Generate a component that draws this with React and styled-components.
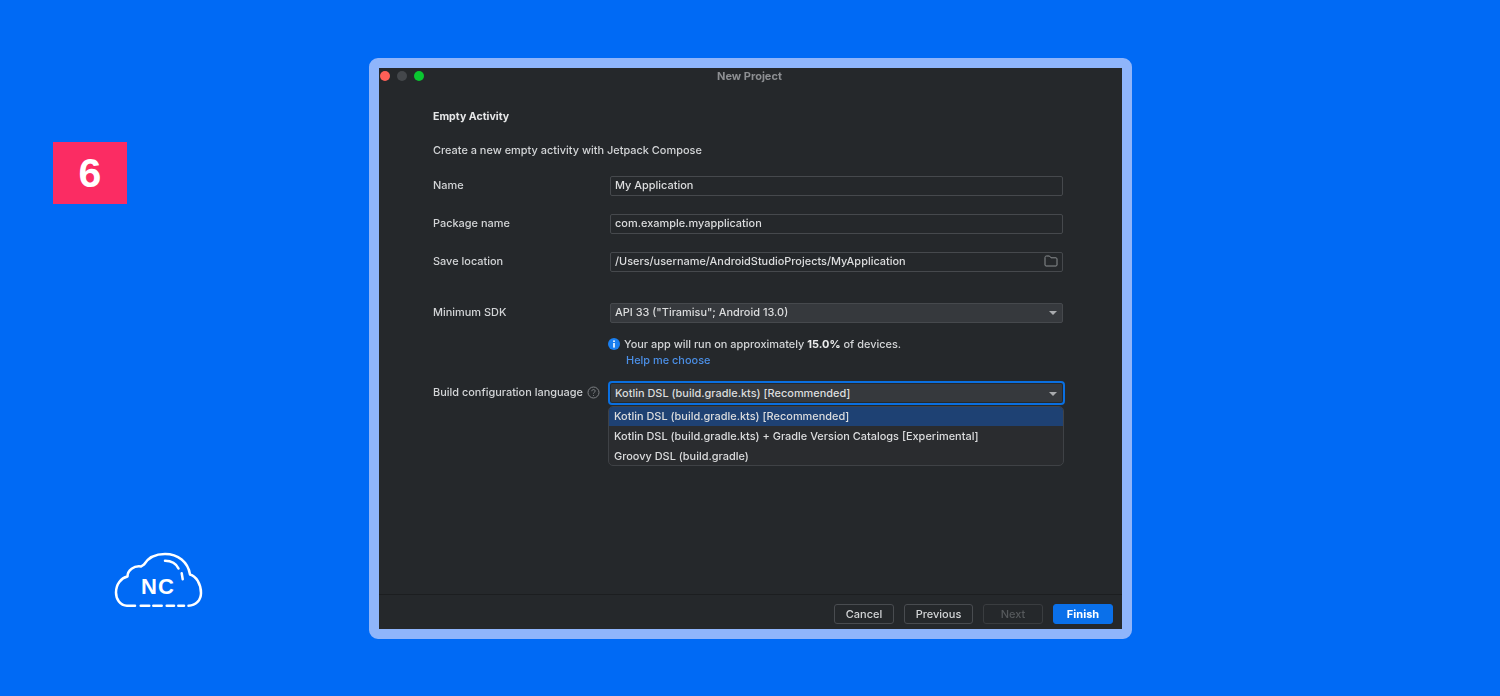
import React from "react";
import styled, { createGlobalStyle } from "styled-components";

const Global = createGlobalStyle`
  html, body { margin: 0; padding: 0; background: #006af5; }
  body { font-family: Inter, "Liberation Sans", sans-serif; }
`;

const Page = styled.div`
  width: 1500px;
  height: 696px;
  background: #006af5;
  display: flex;
  overflow: hidden;
`;

const Side = styled.aside`
  width: 369px;
  height: 696px;
  flex: none;
  padding: 142px 0 86px 53px;
  box-sizing: border-box;
  display: flex;
  flex-direction: column;
`;

const Badge = styled.div`
  width: 74px;
  height: 62px;
  background: #fb2c63;
  color: #fff;
  font: 700 41px/63px "Liberation Sans", sans-serif;
  text-align: center;
`;

const Logo = styled.div`
  margin-top: auto;
  margin-left: 61px;
  width: 90px;
  height: 58px;
  position: relative;
  color: #fff;
`;

const LogoText = styled.span`
  position: absolute;
  left: 0;
  right: 2px;
  top: 23px;
  text-align: center;
  font: 700 22px/24px "Liberation Sans", sans-serif;
  letter-spacing: 1px;
`;

const Frame = styled.div`
  margin-top: 58px;
  width: 763px;
  height: 581px;
  box-sizing: border-box;
  border: 10px solid #8fb5fb;
  border-radius: 9px;
  background: #25282b;
`;

const Win = styled.div`
  width: 743px;
  height: 561px;
  display: flex;
  flex-direction: column;
  color: #d3d5d7;
  font-size: 10.95px;
  font-weight: 500;
  line-height: 16px;
  filter: blur(0.35px);
`;

const TitleBar = styled.div`
  height: 16px;
  flex: none;
  position: relative;
  display: flex;
  align-items: center;
  justify-content: center;
  font-weight: 700;
  font-size: 11px;
  color: #8d8f92;
  padding-right: 2px;
`;

const Lights = styled.div`
  position: absolute;
  left: 1px;
  top: 3px;
  display: flex;
  gap: 7px;
`;

const Light = styled.span`
  width: 10px;
  height: 10px;
  border-radius: 50%;
  background: ${(p) => p.$c};
`;

const Body = styled.div`
  flex: 1;
  padding: 25px 57px 0 54px;
  display: flex;
  flex-direction: column;
`;

const Heading = styled.div`
  font-weight: 700;
  font-size: 10.6px;
  color: #e6e7e8;
`;

const Desc = styled.div`
  margin-top: 17px;
  margin-bottom: 18px;
`;

const Row = styled.div`
  display: grid;
  grid-template-columns: 177px 453px;
  align-items: center;
  margin-bottom: ${(p) => p.$mb ?? 18}px;
`;

const Label = styled.label`
  display: flex;
  align-items: center;
  gap: 4px;
  white-space: nowrap;
  position: relative;
  top: -1px;
`;

const Field = styled.div`
  height: 20px;
  box-sizing: border-box;
  border: 1px solid #46494d;
  border-radius: 2px;
  padding: 0 4px 2px;
  display: flex;
  align-items: center;
  justify-content: space-between;
  color: #dcddde;
  background: ${(p) => (p.$select ? "#36393d" : "transparent")};
`;

const SelectWrap = styled.div`
  position: relative;
`;

const Focused = styled(Field)`
  outline: 2px solid #0a6fe0;
  outline-offset: 0;
  border-color: #25282b;
  margin: 1px 0;
  padding-bottom: 0;
`;

const Caret = styled.span`
  width: 0;
  height: 0;
  border-left: 4px solid transparent;
  border-right: 4px solid transparent;
  border-top: 4px solid #a9abae;
  margin: 2px 1px 0 0;
`;

const Popup = styled.ul`
  position: absolute;
  left: -2px;
  right: -1px;
  top: 24px;
  margin: 0;
  padding: 0;
  list-style: none;
  background: #2a2c2f;
  border: 1px solid #3f4246;
  border-radius: 5px;
  overflow: hidden;
  height: 60px;
  box-sizing: border-box;
  z-index: 2;
`;

const Option = styled.li`
  height: 20px;
  line-height: 20px;
  padding: 0 5px;
  color: #dcddde;
  background: ${(p) => (p.$on ? "#1e4173" : "transparent")};
  &:first-child { height: 19px; line-height: 19px; }
`;

const Info = styled.div`
  margin-left: 177px;
  margin-bottom: 14px;
  position: relative;
  padding-left: 14px;
  margin-top: -5px;
`;

const InfoIcon = styled.svg`
  position: absolute;
  left: -2px;
  top: 2px;
`;

const InfoLine = styled.div`
  b { font-weight: 700; color: #eceded; }
`;

const HelpLink = styled.a`
  display: block;
  color: #4b8fe6;
  margin-left: 2px;
`;

const Footer = styled.footer`
  flex: none;
  height: 35px;
  box-sizing: border-box;
  border-top: 1px solid #1c1e20;
  padding: 9px 9px 5px 0;
  display: flex;
  justify-content: flex-end;
  gap: 10px;
`;

const Btn = styled.button`
  width: ${(p) => p.$w ?? 60}px;
  height: 20px;
  margin: 0;
  padding: 0;
  box-sizing: border-box;
  border-radius: 3px;
  border: 1px solid ${(p) => (p.$primary ? "#0a70ea" : p.$off ? "#3a3d40" : "#494c50")};
  background: ${(p) => (p.$primary ? "#0a70ea" : "transparent")};
  color: ${(p) => (p.$primary ? "#fff" : p.$off ? "#56595c" : "#d3d5d7")};
  font: ${(p) => (p.$primary ? 700 : 500)} 11px/16px Inter, "Liberation Sans", sans-serif;
`;

const Cloud = () => (
  <svg width="90" height="58" viewBox="0 0 90 58" fill="none" stroke="currentColor" strokeWidth="2.5" strokeLinecap="round" strokeLinejoin="round">
    <path d="M21 53.700H13C6 53.700 2 47 2 40.500C2 32 7 26 13.500 24.500C13.500 18 20 13.500 27 14.500L30 12.500C34 6 42 2 51 2C64 2 74 10 76 22.500C82 24 87 32 87 41C87 48 82 53.700 74.500 53.700" />
    <path d="M26.700 53.700H35.300M39.300 53.700H47.700M52.700 53.700H60M64.300 53.700H70" />
    <path d="M51 8.700C57 8.700 62 11 64.500 16.500M67.700 21.300L68.700 27.300" />
  </svg>
);

const Folder = () => (
  <svg width="14" height="12" viewBox="0 0 14 12" fill="none" stroke="#8b8e91" strokeWidth="1">
    <path d="M1 2.500 C1 1.700 1.500 1 2.300 1H5.500L7 2.800H12C12.600 2.800 13 3.300 13 3.900V10C13 10.600 12.600 11 12 11H2C1.400 11 1 10.600 1 10Z" />
  </svg>
);

const Help = () => (
  <svg width="13" height="13" viewBox="0 0 13 13" fill="none" stroke="#7f8285" strokeWidth="1">
    <circle cx="6.500" cy="6.500" r="5.500" />
    <path d="M4.800 5.200C4.800 4.200 5.500 3.600 6.500 3.600C7.500 3.600 8.200 4.200 8.200 5.100C8.200 6.200 6.500 6.300 6.500 7.600" />
    <path d="M6.500 9V9.800" />
  </svg>
);

export default function App() {
  return (
    <>
      <Global />
      <Page>
        <Side>
          <Badge>6</Badge>
          <Logo>
            <Cloud />
            <LogoText>NC</LogoText>
          </Logo>
        </Side>
        <Frame>
          <Win>
            <TitleBar>
              <Lights>
                <Light $c="#ff5f57" />
                <Light $c="#44474b" />
                <Light $c="#0ac630" />
              </Lights>
              New Project
            </TitleBar>
            <Body>
              <Heading>Empty Activity</Heading>
              <Desc>Create a new empty activity with Jetpack Compose</Desc>
              <Row>
                <Label>Name</Label>
                <Field>My Application</Field>
              </Row>
              <Row>
                <Label>Package name</Label>
                <Field>com.example.myapplication</Field>
              </Row>
              <Row $mb={31}>
                <Label>Save location</Label>
                <Field>
                  /Users/username/AndroidStudioProjects/MyApplication
                  <Folder />
                </Field>
              </Row>
              <Row>
                <Label>Minimum SDK</Label>
                <Field $select>
                  API 33 ("Tiramisu"; Android 13.0)
                  <Caret />
                </Field>
              </Row>
              <Info>
                <InfoIcon width="12" height="12" viewBox="0 0 12 12">
                  <circle cx="6" cy="6" r="6" fill="#1a7ff0" />
                  <rect x="5.200" y="2.400" width="1.600" height="1.600" fill="#fff" />
                  <rect x="5.200" y="5" width="1.600" height="4.600" fill="#fff" />
                </InfoIcon>
                <InfoLine>
                  Your app will run on approximately <b>15.0%</b> of devices.
                </InfoLine>
                <HelpLink>Help me choose</HelpLink>
              </Info>
              <Row>
                <Label>
                  Build configuration language
                  <Help />
                </Label>
                <SelectWrap>
                  <Focused $select>
                    Kotlin DSL (build.gradle.kts) [Recommended]
                    <Caret />
                  </Focused>
                  <Popup>
                    <Option $on>Kotlin DSL (build.gradle.kts) [Recommended]</Option>
                    <Option>Kotlin DSL (build.gradle.kts) + Gradle Version Catalogs [Experimental]</Option>
                    <Option>Groovy DSL (build.gradle)</Option>
                  </Popup>
                </SelectWrap>
              </Row>
            </Body>
            <Footer>
              <Btn>Cancel</Btn>
              <Btn $w={69}>Previous</Btn>
              <Btn $off>Next</Btn>
              <Btn $primary>Finish</Btn>
            </Footer>
          </Win>
        </Frame>
      </Page>
    </>
  );
}
